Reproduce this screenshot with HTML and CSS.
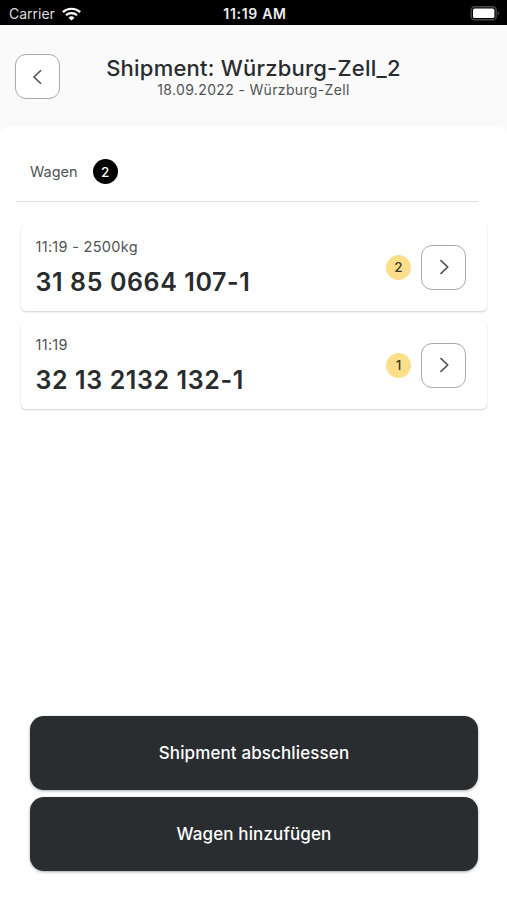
FILE: index.html
```html
<!DOCTYPE html>
<html lang="de">
<head>
  <meta charset="UTF-8" />
  <meta name="viewport" content="width=device-width, initial-scale=1.0" />
  <title>Shipment</title>
  <link rel="stylesheet" href="styles.css">
</head>
<body>
  <div class="statusbar">
    <div class="carrier">
      <span>Carrier</span>
      <svg width="19" height="14" viewBox="0 0 18 14" preserveAspectRatio="none" fill="none" stroke="#fff" stroke-width="2.2">
        <path d="M.8 5.1a11.7 11.7 0 0 1 16.4 0"/>
        <path d="M3.8 8.3a7.4 7.4 0 0 1 10.4 0"/>
        <path d="M9 13.6 6.2 10.7a4 4 0 0 1 5.6 0z" fill="#fff" stroke="none"/>
      </svg>
    </div>
    <span class="clock">11:19 AM</span>
    <svg class="battery" width="31" height="15" viewBox="0 0 31 15">
      <rect x="1.2" y=".8" width="25" height="13" rx="3.6" fill="none" stroke="#484848" stroke-width="1.4"/>
      <rect x="3" y="2.6" width="21.4" height="9.4" rx="1.6" fill="#fff"/>
      <path d="M27.6 5a2.5 2.5 0 0 1 0 4.6z" fill="#484848"/>
    </svg>
  </div>

  <header>
    <button class="icon-btn">
      <svg width="22" height="22" viewBox="0 0 22 22"><path d="M14 4.2 7 11l7 6.8"/></svg>
    </button>
    <div class="heading">
      <h1>Shipment: Würzburg-Zell_2</h1>
      <p>18.09.2022 - Würzburg-Zell</p>
    </div>
  </header>

  <main>
    <div class="section-title">
      <span>Wagen</span>
      <span class="count">2</span>
    </div>

    <div class="list">
      <div class="card">
        <div class="info">
          <p>11:19 - 2500kg</p>
          <h2>31 85 0664 107-1</h2>
        </div>
        <span class="count yellow">2</span>
        <button class="icon-btn">
          <svg width="22" height="22" viewBox="0 0 22 22"><path d="M7.5 4.2 14.7 11l-7.2 6.8"/></svg>
        </button>
      </div>
      <div class="card">
        <div class="info">
          <p>11:19</p>
          <h2>32 13 2132 132-1</h2>
        </div>
        <span class="count yellow">1</span>
        <button class="icon-btn">
          <svg width="22" height="22" viewBox="0 0 22 22"><path d="M7.5 4.2 14.7 11l-7.2 6.8"/></svg>
        </button>
      </div>
    </div>

    <div class="actions">
      <button>Shipment abschliessen</button>
      <button>Wagen hinzufügen</button>
    </div>
  </main>
</body>
</html>
```
FILE: styles.css
```css
* { box-sizing: border-box; }
body {
  font-family: Inter, "Liberation Sans", sans-serif;
  background-color: #fafafa;
  color: #292c2e;
  margin: 0;
  height: 100vh;
  display: flex;
  flex-direction: column;
  overflow: hidden;
}
h1, h2, p { margin: 0; }
.statusbar {
  display: grid;
  grid-template-columns: 1fr auto 1fr;
  align-items: center;
  height: 25px;
  padding: 2px 6px 0 9px;
  background-color: #000;
  color: #fff;
  font-size: 14px;
}
.carrier {
  display: flex;
  align-items: center;
  gap: 7px;
  color: #ddd;
}
.clock {
  font-weight: 600;
  font-size: 14px;
  letter-spacing: 0.7px;
  color: #eee;
}
.battery { justify-self: end; }
header {
  display: grid;
  grid-template-columns: 45px 1fr 45px;
  height: 102px;
  padding: 29px 15px 0;
}
.icon-btn {
  display: flex;
  align-items: center;
  justify-content: center;
  width: 45px;
  height: 45px;
  padding: 0;
  border: 1px solid #a9aaac;
  border-radius: 11px;
  background-color: #fff;
  cursor: pointer;
}
.icon-btn path {
  fill: none;
  stroke: #505356;
  stroke-width: 1.6;
}
.heading {
  text-align: center;
  white-space: nowrap;
}
h1 {
  font-size: 22px;
  font-weight: 450;
  line-height: 29px;
  letter-spacing: 0.22px;
}
.heading p {
  font-size: 14px;
  line-height: 13px;
  letter-spacing: 0.35px;
  color: #505356;
}
main {
  flex: 1;
  display: flex;
  flex-direction: column;
  padding: 0 20px 29px 21px;
  background-color: #fff;
  border-radius: 8px 8px 0 0;
}
.section-title {
  display: flex;
  align-items: center;
  gap: 15px;
  height: 75px;
  margin: 0 9px 0 -5px;
  padding: 15px 14px 0;
  border-bottom: 1px solid #dedede;
  font-size: 14.5px;
  color: #505356;
}
.count {
  display: flex;
  align-items: center;
  justify-content: center;
  width: 25px;
  height: 25px;
  border-radius: 50%;
  background-color: #000;
  color: #fff;
  font-size: 13.5px;
  font-weight: 500;
}
.count.yellow {
  background-color: #fddf8b;
  color: #3d3a2e;
}
.list {
  display: flex;
  flex-direction: column;
  gap: 10px;
  margin-top: 21px;
}
.card {
  display: flex;
  align-items: center;
  height: 88px;
  padding: 0 21px 0 14.5px;
  border-radius: 5px;
  background-color: #fff;
  box-shadow: 0 1px 2px rgba(0, 0, 0, 0.2);
}
.info {
  flex: 1;
  padding-top: 2px;
}
.info p {
  font-size: 14.5px;
  line-height: 18px;
  letter-spacing: 0.3px;
  color: #505356;
}
.info h2 {
  margin-top: 10px;
  font-size: 25px;
  font-weight: 600;
  line-height: 33px;
  letter-spacing: 0.6px;
}
.card .icon-btn { margin-left: 10px; }
.actions {
  display: flex;
  flex-direction: column;
  gap: 7px;
  margin: auto 9px 0;
}
.actions button {
  height: 74px;
  border: none;
  border-radius: 14px;
  background-color: #292d30;
  color: #fff;
  font-family: inherit;
  font-size: 17px;
  font-weight: 550;
  letter-spacing: 0.12px;
  box-shadow: 0 1px 3px rgba(0, 0, 0, 0.35);
  cursor: pointer;
}
```
